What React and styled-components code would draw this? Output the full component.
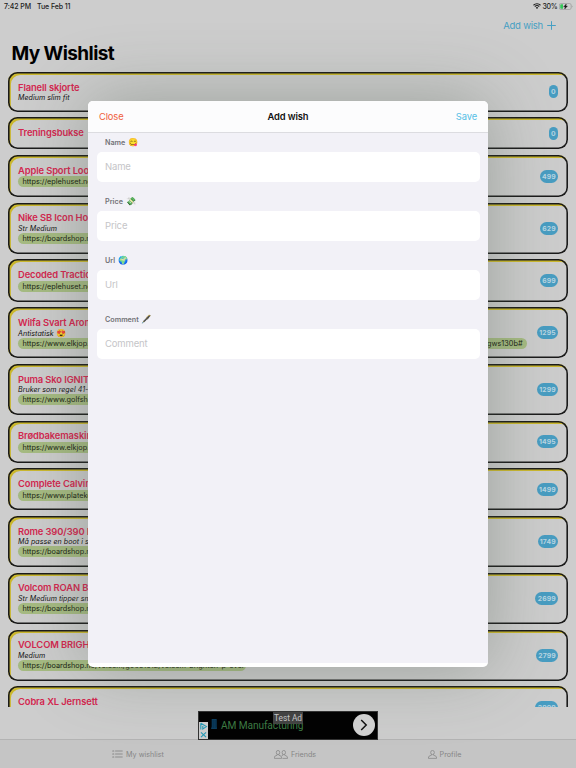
import styled, { createGlobalStyle } from "styled-components";

const GlobalStyle = createGlobalStyle`
  * {
    box-sizing: border-box;
  }
  body {
    margin: 0;
    font-family: Inter, "Liberation Sans", "Noto Color Emoji", sans-serif;
    background: #cdcdcd;
    overflow: hidden;
  }
  svg {
    flex: none;
  }
`;

const Screen = styled.div`
  position: relative;
  display: flex;
  flex-direction: column;
  width: 576px;
  height: 768px;
  overflow: hidden;
  background: #cdcdcd;
`;

const StatusBar = styled.div`
  display: flex;
  justify-content: space-between;
  align-items: center;
  height: 12px;
  padding: 0 3px 0 4px;
  font-size: 7px;
  font-weight: 500;
  color: #1c1c1c;
`;

const StatusGroup = styled.div`
  display: flex;
  align-items: center;
  gap: ${(props) => props.$gap}px;
  letter-spacing: ${(props) => props.$spacing}px;
`;

const NavBar = styled.div`
  display: flex;
  justify-content: flex-end;
  align-items: center;
  gap: 4px;
  height: 27px;
  margin-bottom: 1px;
  padding-right: 20px;
  font-size: 9.5px;
  letter-spacing: -0.22px;
  color: #469fc3;
`;

const Title = styled.h1`
  height: 32px;
  margin: 0;
  padding-left: 11.5px;
  font-size: 19px;
  line-height: 27px;
  font-weight: 700;
  letter-spacing: -0.58px;
  color: #000;
`;

const List = styled.div`
  flex: none;
  height: 635px;
  padding: 0 8px;
  overflow: hidden;
`;

const Card = styled.div`
  display: flex;
  justify-content: space-between;
  align-items: center;
  height: ${(props) => props.$height}px;
  margin-bottom: 5.6px;
  padding: 0 10px;
  border-radius: 9.5px;
  box-shadow: inset 0 0 0 1.6px #1a1a1a, inset 2.8px 3px 0 0.1px #cbb82e;
`;

const Info = styled.div`
  display: flex;
  flex-direction: column;
  align-items: flex-start;
  align-self: flex-start;
  padding-top: 9.6px;
`;

const WishName = styled.div`
  height: 11.8px;
  font-size: 9.4px;
  line-height: 12.7px;
  font-weight: 600;
  letter-spacing: -0.12px;
  white-space: nowrap;
  color: #d4264f;
`;

const Comment = styled.div`
  display: flex;
  align-items: center;
  gap: 3px;
  height: 9px;
  font-size: 7.1px;
  line-height: 9px;
  font-style: italic;
  letter-spacing: 0.04px;
  white-space: nowrap;
  color: #111;
`;

const Url = styled.div`
  display: flex;
  justify-content: space-between;
  width: ${(props) => (props.$width ? props.$width + "px" : "auto")};
  height: 11px;
  padding: 0 4.5px;
  border-radius: 5.5px;
  font-size: 7.3px;
  line-height: 11px;
  white-space: nowrap;
  color: #161b10;
  background: #a6bb82;
`;

const Price = styled.div`
  height: 13px;
  padding: 0 2.3px;
  border-radius: 6.5px;
  font-size: 6.8px;
  line-height: 13.5px;
  font-weight: 700;
  letter-spacing: 0.1px;
  color: #b9d6e2;
  background: #489dc2;
`;

const TabBar = styled.div`
  flex: none;
  display: grid;
  grid-template-columns: 276px 38px 261px;
  height: 29px;
  margin-top: auto;
  border-top: 1px solid #b3b3b3;
  background: #c5c5c5;
`;

const Tab = styled.div`
  display: flex;
  justify-content: center;
  align-items: center;
  gap: 3px;
  font-size: 7.2px;
  white-space: nowrap;
  color: #858585;
`;

const Ad = styled.div`
  position: absolute;
  left: 198px;
  top: 711px;
  display: flex;
  align-items: center;
  width: 180px;
  height: 28.5px;
  background: #020202;
  border: 0.5px solid #333;
`;

const AdMarks = styled.div`
  align-self: flex-end;
  width: 9px;
  height: 17px;
  background: #ccc;
`;

const AdText = styled.div`
  flex: 1;
  padding-left: 1px;
  font-family: Roboto, sans-serif;
  font-size: 10.2px;
  letter-spacing: -0.12px;
  color: #3d7a42;
`;

const AdArrow = styled.div`
  display: flex;
  justify-content: center;
  align-items: center;
  width: 22px;
  height: 22px;
  margin-right: 2px;
  border-radius: 50%;
  background: #d0d0d0;
`;

const AdTag = styled.div`
  position: absolute;
  left: 74px;
  top: 0;
  width: 30px;
  height: 11.5px;
  font-family: Roboto, sans-serif;
  font-size: 8.3px;
  line-height: 12px;
  text-align: center;
  color: #c4c4c4;
  background: rgba(72, 72, 72, 0.92);
`;

const Modal = styled.div`
  position: absolute;
  left: 88px;
  top: 101px;
  width: 400px;
  height: 565.5px;
  padding-bottom: 4px;
  overflow: hidden;
  border-radius: 5px;
  background: #fff;
`;

const ModalShadow = styled.div`
  position: absolute;
  left: 88px;
  top: 101px;
  width: 400px;
  height: 565.5px;
  border-radius: 5px;
  box-shadow: 0 0 70px rgba(80, 95, 80, 0.42);
`;

const ModalHeader = styled.div`
  display: grid;
  grid-template-columns: 1fr auto 1fr;
  align-items: center;
  height: 32px;
  padding: 0 11px;
  border-bottom: 1px solid #dcdce0;
  letter-spacing: -0.14px;
  background: #fcfcfd;
`;

const HeaderButton = styled.span`
  font-size: 9.4px;
  text-align: ${(props) => props.$align};
  color: ${(props) => props.$color};
`;

const ModalTitle = styled.span`
  font-size: 9.4px;
  font-weight: 600;
  color: #111;
`;

const Form = styled.div`
  height: 529.5px;
  padding: 0 8.5px;
  background: #f2f1f7;
`;

const Field = styled.label`
  display: block;
  height: 59px;
`;

const Label = styled.div`
  display: flex;
  align-items: center;
  gap: 3px;
  height: 19px;
  padding-left: 8.5px;
  font-size: 7.2px;
  font-weight: 600;
  color: #737378;
`;

const Emoji = styled.span`
  font-family: "Noto Color Emoji";
  font-size: 8.2px;
  line-height: 9px;
  font-style: normal;
`;

const Input = styled.input`
  display: block;
  width: 100%;
  height: 30px;
  padding: 0 8.5px 1.6px;
  border: 0;
  border-radius: 5px;
  outline: none;
  font-family: inherit;
  font-size: 9.5px;
  letter-spacing: -0.16px;
  background: #fff;
  &::placeholder {
    color: #c5c5c8;
  }
`;

const wishes = [
  { name: "Flanell skjorte", comment: "Medium slim fit", price: 0, height: 39.8 },
  { name: "Treningsbukse", price: 0, height: 32 },
  { name: "Apple Sport Loop 40mm", url: "https://eplehuset.no/apple", price: 499, height: 42.1 },
  { name: "Nike SB Icon Hoodie", comment: "Str Medium", url: "https://boardshop.no/nike", price: 629, height: 51.2 },
  { name: "Decoded Traction", url: "https://eplehuset.no/decoded", price: 699, height: 42.1 },
  {
    name: "Wilfa Svart Aroma",
    comment: "Antistatisk",
    emoji: "😍",
    url: "https://www.elkjop.no/product",
    urlEnd: "gws130b#",
    urlWidth: 509,
    price: 1295,
    height: 51.2,
  },
  { name: "Puma Sko IGNITE", comment: "Bruker som regel 41-42", url: "https://www.golfshopen.no", price: 1299, height: 51.2 },
  { name: "Brødbakemaskin", url: "https://www.elkjop.no/product", price: 1495, height: 42.1 },
  { name: "Complete Calvin", url: "https://www.platekompaniet.no", price: 1499, height: 42.1 },
  { name: "Rome 390/390 Boss", comment: "Må passe en boot i str 43", url: "https://boardshop.no/rome", price: 1749, height: 51.2 },
  { name: "Volcom ROAN BIB", comment: "Str Medium tipper small", url: "https://boardshop.no/volcom", price: 2699, height: 51.2 },
  {
    name: "VOLCOM BRIGHTON",
    comment: "Medium",
    url: "https://boardshop.no/volcom/g0651912/volcom-brighton-p-over",
    urlWidth: 228,
    price: 2799,
    height: 51.2,
  },
  { name: "Cobra XL Jernsett", price: 3999, height: 42.1 },
];

const fields = [
  { label: "Name", emoji: "😋" },
  { label: "Price", emoji: "💸" },
  { label: "Url", emoji: "🌍" },
  { label: "Comment", emoji: "🖋" },
];

const WifiIcon = () => (
  <svg width="8" height="6" viewBox="0 0 16 12" fill="none" stroke="#1c1c1c" strokeWidth="2.2">
    <path d="M1 4.5a10 10 0 0 1 14 0M3.6 7.2a6.3 6.3 0 0 1 8.8 0" />
    <path d="M8 11.8 5.6 9.3a3.5 3.5 0 0 1 4.8 0z" fill="#1c1c1c" stroke="none" />
  </svg>
);

const BatteryIcon = () => (
  <svg width="14" height="7" viewBox="0 0 28 14">
    <rect x="0.7" y="1" width="23.6" height="12" rx="3.2" fill="none" stroke="#929292" strokeWidth="1.2" />
    <path d="M4.5 2.7H8v8.6H4.5A2 2 0 0 1 2.5 9.3V4.7a2 2 0 0 1 2-2z" fill="#35c759" />
    <path d="M14.6 2 9.3 7.7h3.3L11.4 12l5.4-5.8h-3.4z" fill="#111" stroke="#111" strokeWidth="0.8" />
    <path d="M25.6 5v4c1.8-.7 1.8-3.3 0-4z" fill="#929292" />
  </svg>
);

const PlusIcon = () => (
  <svg width="9" height="9" viewBox="0 0 9 9" stroke="#469fc3" strokeWidth="1">
    <path d="M4.5 0.2v8.6M0.2 4.5h8.6" />
  </svg>
);

const ListIcon = () => (
  <svg width="11" height="8" viewBox="0 0 22 16" stroke="#858585" strokeWidth="1.7" strokeLinecap="round">
    <path d="M7 2h13.5M7 8h13.5M7 14h13.5" />
    <path d="M1.5 2h2M1.5 8h2M1.5 14h2" strokeWidth="2.4" />
  </svg>
);

const FriendsIcon = () => (
  <svg width="14" height="9" viewBox="0 0 28 18" fill="none" stroke="#858585" strokeWidth="1.5">
    <ellipse cx="8" cy="5" rx="3.4" ry="4.2" />
    <path d="M6.3 8.7v1.7l-4.6 2C.9 13.1.8 15 .8 16.8h14.4c0-1.8-.2-3.8-1-4.4l-4.6-2V8.7" />
    <ellipse cx="19.6" cy="5" rx="3.4" ry="4.2" />
    <path d="M17.8 8.7v1.7l-2.6 1.2M21.3 8.7v1.7l4.4 2c1 .7 1.4 2.6 1.4 4.4H17" />
  </svg>
);

const ProfileIcon = () => (
  <svg width="9" height="9" viewBox="0 0 18 18" fill="none" stroke="#858585" strokeWidth="1.5">
    <ellipse cx="9" cy="5" rx="3.7" ry="4.2" />
    <path d="M6.9 8.6v1.8l-4.8 2C1.2 12.9.8 15 .8 16.8h16.4c0-1.8-.4-3.9-1.3-4.4l-4.8-2V8.6" />
  </svg>
);

const AdChoices = () => (
  <svg width="9" height="17" viewBox="0 0 9 17" fill="none" stroke="#2499b5" strokeWidth="1.1">
    <path d="M1.8 1.2v6.2M1.8 1.2l5.6 3.4-3.6 2.3V4" />
    <path d="M2 10.3l5 4.8M7 10.3l-5 4.8" />
  </svg>
);

const AdLogo = () => (
  <svg width="12" height="13" viewBox="-3 0 12 13">
    <path d="M0.7 0h5v7.5L6 10H0l.7-2.5z" fill="#0b3d5e" />
    <path d="M2.2 1v8M4.2 1v8" stroke="#072a43" strokeWidth="0.6" />
  </svg>
);

const ArrowIcon = () => (
  <svg width="8" height="12" viewBox="0 0 8 12" fill="none" stroke="#111" strokeWidth="1.5">
    <path d="M1.2 1l5 5-5 5" />
  </svg>
);

function WishCard({ wish }) {
  return (
    <Card $height={wish.height}>
      <Info>
        <WishName>{wish.name}</WishName>
        {wish.comment && (
          <Comment>
            {wish.comment}
            {wish.emoji && <Emoji>{wish.emoji}</Emoji>}
          </Comment>
        )}
        {wish.url && (
          <Url $width={wish.urlWidth}>
            <span>{wish.url}</span>
            {wish.urlEnd && <span>{wish.urlEnd}</span>}
          </Url>
        )}
      </Info>
      <Price>{wish.price}</Price>
    </Card>
  );
}

export default function App() {
  return (
    <>
      <GlobalStyle />
      <Screen>
        <StatusBar>
          <StatusGroup $gap={6} $spacing={-0.08}>
            <span>7:42 PM</span>
            <span>Tue Feb 11</span>
          </StatusGroup>
          <StatusGroup $gap={1.5} $spacing={-0.25}>
            <WifiIcon />
            <span>30%</span>
            <BatteryIcon />
          </StatusGroup>
        </StatusBar>
        <NavBar>
          Add wish
          <PlusIcon />
        </NavBar>
        <Title>My Wishlist</Title>
        <List>
          {wishes.map((wish) => (
            <WishCard key={wish.name} wish={wish} />
          ))}
        </List>
        <TabBar>
          <Tab>
            <ListIcon />
            My wishlist
          </Tab>
          <Tab>
            <FriendsIcon />
            Friends
          </Tab>
          <Tab>
            <ProfileIcon />
            Profile
          </Tab>
        </TabBar>
        <ModalShadow />
        <Ad>
          <AdMarks>
            <AdChoices />
          </AdMarks>
          <AdLogo />
          <AdText>AM Manufacturing</AdText>
          <AdArrow>
            <ArrowIcon />
          </AdArrow>
          <AdTag>Test Ad</AdTag>
        </Ad>
        <Modal>
          <ModalHeader>
            <HeaderButton $align="left" $color="#f0603c">
              Close
            </HeaderButton>
            <ModalTitle>Add wish</ModalTitle>
            <HeaderButton $align="right" $color="#56bfe6">
              Save
            </HeaderButton>
          </ModalHeader>
          <Form>
            {fields.map((field) => (
              <Field key={field.label}>
                <Label>
                  {field.label}
                  <Emoji>{field.emoji}</Emoji>
                </Label>
                <Input placeholder={field.label} />
              </Field>
            ))}
          </Form>
        </Modal>
      </Screen>
    </>
  );
}
